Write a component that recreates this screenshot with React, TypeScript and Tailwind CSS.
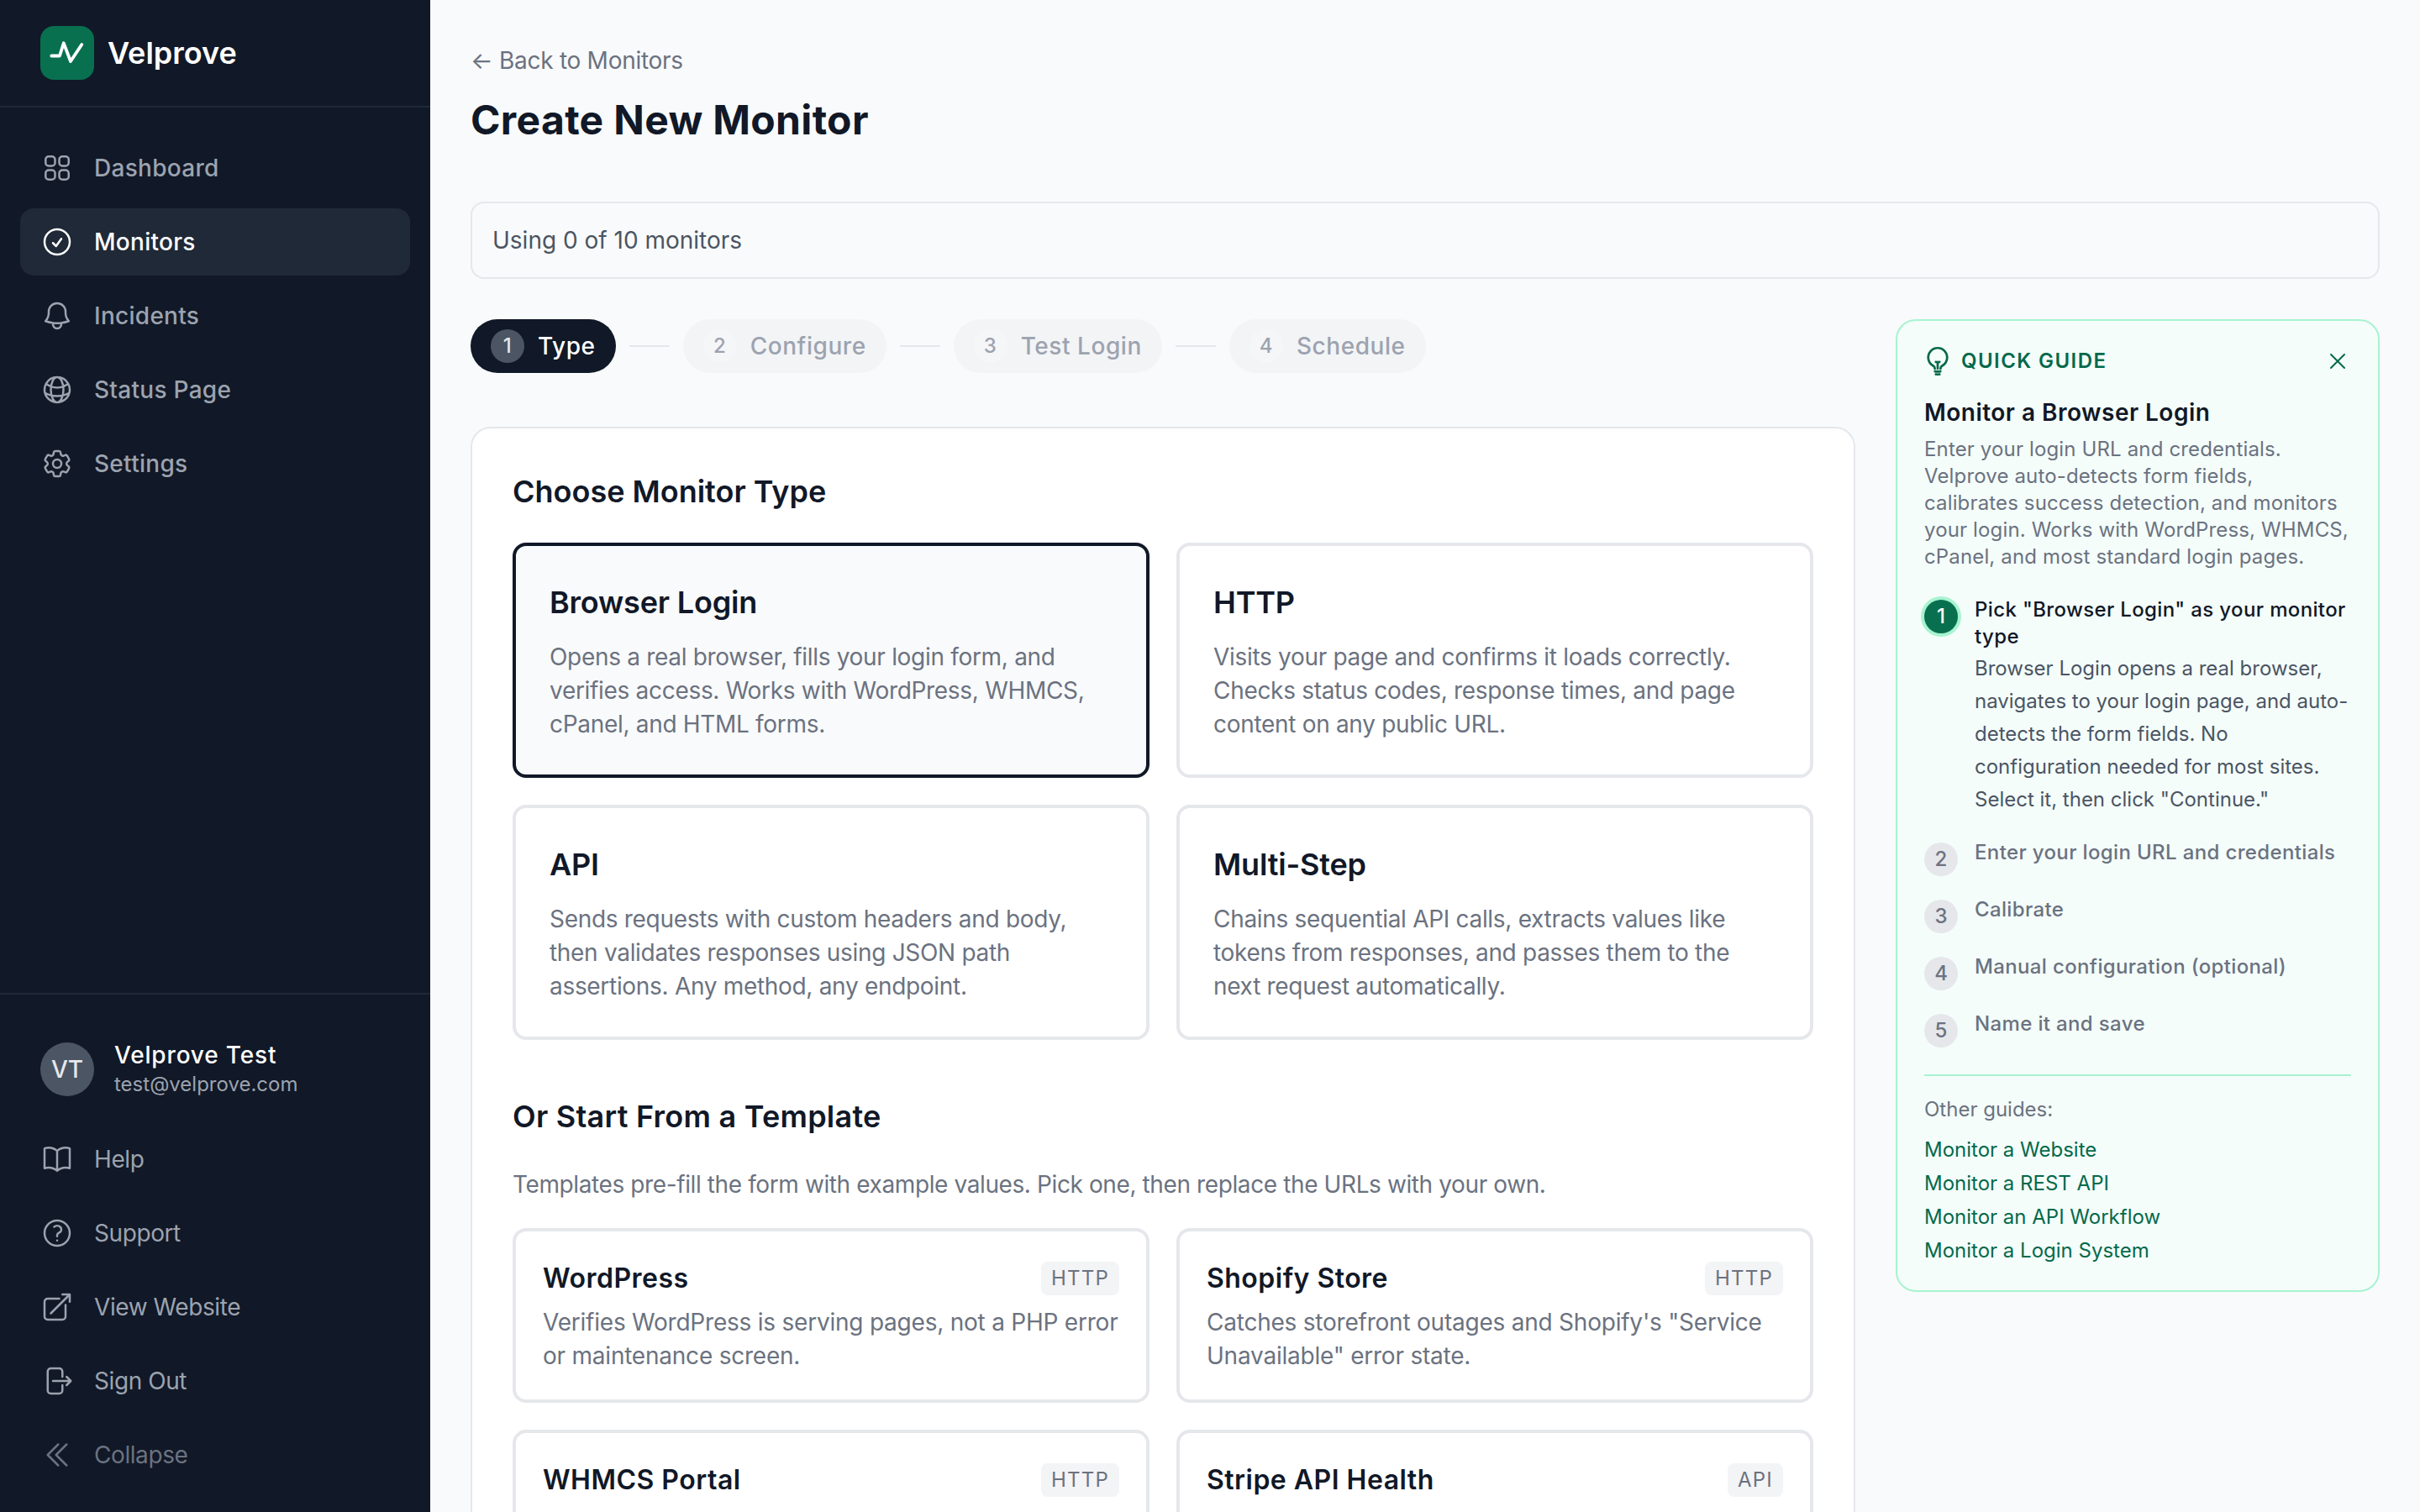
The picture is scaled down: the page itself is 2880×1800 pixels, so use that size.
import {
  HiOutlineSquares2X2,
  HiOutlineCheckCircle,
  HiOutlineBell,
  HiOutlineGlobeAlt,
  HiOutlineCog6Tooth,
  HiOutlineBookOpen,
  HiOutlineQuestionMarkCircle,
  HiOutlineArrowTopRightOnSquare,
  HiOutlineArrowRightOnRectangle,
  HiOutlineChevronDoubleLeft,
  HiOutlineLightBulb,
  HiOutlineXMark,
} from 'react-icons/hi2';

const navItems = [
  { label: 'Dashboard', icon: HiOutlineSquares2X2 },
  { label: 'Monitors', icon: HiOutlineCheckCircle, active: true },
  { label: 'Incidents', icon: HiOutlineBell },
  { label: 'Status Page', icon: HiOutlineGlobeAlt },
  { label: 'Settings', icon: HiOutlineCog6Tooth },
];

const footerItems = [
  { label: 'Help', icon: HiOutlineBookOpen },
  { label: 'Support', icon: HiOutlineQuestionMarkCircle },
  { label: 'View Website', icon: HiOutlineArrowTopRightOnSquare },
  { label: 'Sign Out', icon: HiOutlineArrowRightOnRectangle },
  { label: 'Collapse', icon: HiOutlineChevronDoubleLeft, dim: true },
];

const steps = [
  { n: 1, label: 'Type', active: true },
  { n: 2, label: 'Configure' },
  { n: 3, label: 'Test Login' },
  { n: 4, label: 'Schedule' },
];

const monitorTypes = [
  {
    title: 'Browser Login',
    desc: 'Opens a real browser, fills your login form, and verifies access. Works with WordPress, WHMCS, cPanel, and HTML forms.',
    selected: true,
  },
  {
    title: 'HTTP',
    desc: 'Visits your page and confirms it loads correctly. Checks status codes, response times, and page content on any public URL.',
  },
  {
    title: 'API',
    desc: 'Sends requests with custom headers and body, then validates responses using JSON path assertions. Any method, any endpoint.',
  },
  {
    title: 'Multi-Step',
    desc: 'Chains sequential API calls, extracts values like tokens from responses, and passes them to the next request automatically.',
  },
];

const templates = [
  { title: 'WordPress', tag: 'HTTP', desc: 'Verifies WordPress is serving pages, not a PHP error or maintenance screen.' },
  { title: 'Shopify Store', tag: 'HTTP', desc: 'Catches storefront outages and Shopify\'s "Service Unavailable" error state.' },
  { title: 'WHMCS Portal', tag: 'HTTP' },
  { title: 'Stripe API Health', tag: 'API' },
];

const laterSteps = ['Enter your login URL and credentials', 'Calibrate', 'Manual configuration (optional)', 'Name it and save'];
const otherGuides = ['Monitor a Website', 'Monitor a REST API', 'Monitor an API Workflow', 'Monitor a Login System'];

function Sidebar() {
  return (
    <aside className="flex h-full w-[512px] shrink-0 flex-col bg-[#111827]">
      <div className="flex h-[128px] items-center gap-4 border-b-2 border-[#1f2937] px-12">
        <div className="flex h-16 w-16 items-center justify-center rounded-2xl bg-[#08704f]">
          <svg viewBox="0 0 64 64" className="h-16 w-16" fill="none" stroke="#fff" strokeWidth="3.8" strokeLinecap="round" strokeLinejoin="round">
            <path d="M13.3 35.5H23L27.8 20.3 36 42 49.3 22" />
          </svg>
        </div>
        <span className="text-[36px] leading-[56px] font-semibold text-white">Velprove</span>
      </div>

      <nav className="flex flex-col gap-2 px-6 pt-8">
        {navItems.map((item) => (
          <div
            key={item.label}
            className={`flex h-20 items-center gap-6 rounded-2xl px-6 text-[28px] font-medium tracking-[0.01em] ${item.active ? 'bg-[#1f2937] text-white' : 'text-[#9ca3af]'}`}
          >
            <item.icon className="h-10 w-10 shrink-0" />
            <span>{item.label}</span>
          </div>
        ))}
      </nav>

      <div className="mt-auto border-t-2 border-[#1f2937] px-6 pb-7">
        <div className="flex items-center gap-6 px-6 pt-[54px] pb-8">
          <div className="flex h-16 w-16 items-center justify-center rounded-full bg-[#4b5563] text-[28px] font-medium text-[#e5e7eb]">VT</div>
          <div className="flex flex-col">
            <span className="text-[28px] leading-9 font-medium tracking-[0.03em] text-white">Velprove Test</span>
            <span className="text-[24px] leading-[34px] text-[#9ca3af]">test@velprove.com</span>
          </div>
        </div>
        <div className="flex flex-col gap-2">
          {footerItems.map((item) => (
            <div
              key={item.label}
              className={`flex h-20 items-center gap-6 px-6 text-[28px] tracking-[-0.015em] ${item.dim ? 'text-[#6b7280]' : 'text-[#9ca3af]'}`}
            >
              <item.icon className="h-10 w-10 shrink-0" />
              <span>{item.label}</span>
            </div>
          ))}
        </div>
      </div>
    </aside>
  );
}

function Stepper() {
  return (
    <div className="mb-16 flex items-center gap-4">
      {steps.map((step, i) => (
        <div key={step.n} className="flex items-center gap-4">
          {i > 0 && <div className="h-0.5 w-12 bg-[#e5e7eb]" />}
          <div
            className={`flex h-16 items-center gap-4 rounded-full px-6 text-[28px] font-medium tracking-[0.02em] ${step.active ? 'bg-[#111827] text-white' : 'bg-[#f3f4f6] text-[#9ca3af]'}`}
          >
            <span className={`flex h-10 w-10 items-center justify-center rounded-full text-[24px] ${step.active ? 'bg-[#4b5563] text-[#e5e7eb]' : 'bg-[#f5f6f8] text-[#9ca3af]'}`}>
              {step.n}
            </span>
            <span>{step.label}</span>
          </div>
        </div>
      ))}
    </div>
  );
}

function MainCard() {
  return (
    <div className="rounded-3xl border-2 border-[#e5e7eb] bg-white px-12 pt-[47px] pb-12">
      <h2 className="mb-[33px] text-[36px] leading-[56px] font-semibold text-[#111827]">Choose Monitor Type</h2>
      <div className="grid grid-cols-2 gap-8">
        {monitorTypes.map((card) => (
          <div
            key={card.title}
            className={`rounded-2xl border-4 p-10 ${card.selected ? 'border-[#111827] bg-[#f9fafb]' : 'border-[#e5e7eb] bg-white'}`}
          >
            <h3 className="mt-px mb-[19px] text-[36px] leading-[52px] font-semibold tracking-[-0.005em] text-[#111827]">{card.title}</h3>
            <p className="text-[28px] leading-10 tracking-[-0.011em] text-[#6b7280]">{card.desc}</p>
          </div>
        ))}
      </div>

      <h2 className="mt-[63px] text-[36px] leading-[56px] font-semibold tracking-[0.007em] text-[#111827]">Or Start From a Template</h2>
      <p className="mt-[33px] mb-8 text-[28px] leading-10 tracking-[-0.014em] text-[#6b7280]">
        Templates pre-fill the form with example values. Pick one, then replace the URLs with your own.
      </p>
      <div className="grid grid-cols-2 gap-8">
        {templates.map((card) => (
          <div key={card.title} className="rounded-2xl border-4 border-[#e5e7eb] bg-white p-8">
            <div className="mb-2 flex h-12 items-center justify-between">
              <h3 className="text-[32px] font-semibold tracking-[0.015em] text-[#111827]">{card.title}</h3>
              <span className="rounded-lg bg-[#f3f4f6] px-3 py-1 text-[24px] leading-8 tracking-[0.05em] text-[#6b7280]">{card.tag}</span>
            </div>
            {card.desc && <p className="text-[28px] leading-10 tracking-[-0.008em] text-[#6b7280]">{card.desc}</p>}
          </div>
        ))}
      </div>
    </div>
  );
}

function GuidePanel() {
  return (
    <div className="w-[576px] shrink-0 rounded-3xl border-2 border-[#a7f3d0] bg-[#f4fdfa] px-8 pt-8 pb-[27px]">
      <div className="flex h-8 items-center justify-between">
        <div className="-ml-0.5 flex items-center gap-[10px] text-[#05694a]">
          <HiOutlineLightBulb className="h-9 w-9 stroke-[1.8]" />
          <span className="text-[24px] font-semibold tracking-[0.06em]">QUICK GUIDE</span>
        </div>
        <HiOutlineXMark className="h-8 w-8 text-[#05694a]" />
      </div>
      <h3 className="mt-[27px] text-[28px] leading-9 font-semibold tracking-[0.017em] text-[#111827]">Monitor a Browser Login</h3>
      <p className="mt-[10px] text-[24px] leading-8 tracking-[0.006em] text-[#6b7280]">
        Enter your login URL and credentials. Velprove auto-detects form fields, calibrates success detection, and monitors your login. Works with WordPress, WHMCS, cPanel, and most standard login pages.
      </p>

      <div className="mt-[31px] flex flex-col gap-6">
        <div className="flex gap-5">
          <span className="mt-1 flex h-10 w-10 shrink-0 items-center justify-center rounded-full bg-[#08704f] text-[24px] font-medium text-white ring-4 ring-[#a7f3d0]">1</span>
          <div className="pb-1">
            <p className="text-[24px] leading-8 font-medium tracking-[0.015em] text-[#111827]">Pick "Browser Login" as your monitor type</p>
            <p className="mt-[2px] text-[24px] leading-[39px] text-[#4b5563]">
              Browser Login opens a real browser, navigates to your login page, and auto-detects the form fields. No configuration needed for most sites. Select it, then click "Continue."
            </p>
          </div>
        </div>
        {laterSteps.map((label, i) => (
          <div key={label} className="flex gap-5">
            <span className="mt-1 flex h-10 w-10 shrink-0 items-center justify-center rounded-full bg-[#e5e7eb] text-[24px] font-medium text-[#6b7280]">{i + 2}</span>
            <p className="text-[24px] leading-8 font-medium tracking-[0.015em] text-[#6b7280]">{label}</p>
          </div>
        ))}
      </div>

      <div className="mt-8 border-t-2 border-[#a7f3d0] pt-6">
        <p className="text-[24px] leading-8 text-[#6b7280]">Other guides:</p>
        <div className="mt-3 flex flex-col">
          {otherGuides.map((g) => (
            <span key={g} className="text-[24px] leading-10 text-[#05694a]">{g}</span>
          ))}
        </div>
      </div>
    </div>
  );
}

export default function App() {
  return (
    <div className="flex h-screen overflow-hidden bg-[#f9fafb] font-[Inter,sans-serif]">
      <Sidebar />
      <main className="min-w-0 flex-1 overflow-hidden px-12 pt-[52px]">
        <p className="text-[28px] leading-10 tracking-[-0.01em] text-[#6b7280]">← Back to Monitors</p>
        <h1 className="mt-[19px] mb-[65px] text-[48px] leading-16 font-bold tracking-[0.007em] text-[#111827]">Create New Monitor</h1>
        <div className="mb-12 rounded-2xl border-2 border-[#e5e7eb] p-6 text-[28px] leading-10 text-[#4b5563]">Using 0 of 10 monitors</div>
        <div className="flex items-start gap-12">
          <div className="min-w-0 flex-1">
            <Stepper />
            <MainCard />
          </div>
          <GuidePanel />
        </div>
      </main>
    </div>
  );
}
